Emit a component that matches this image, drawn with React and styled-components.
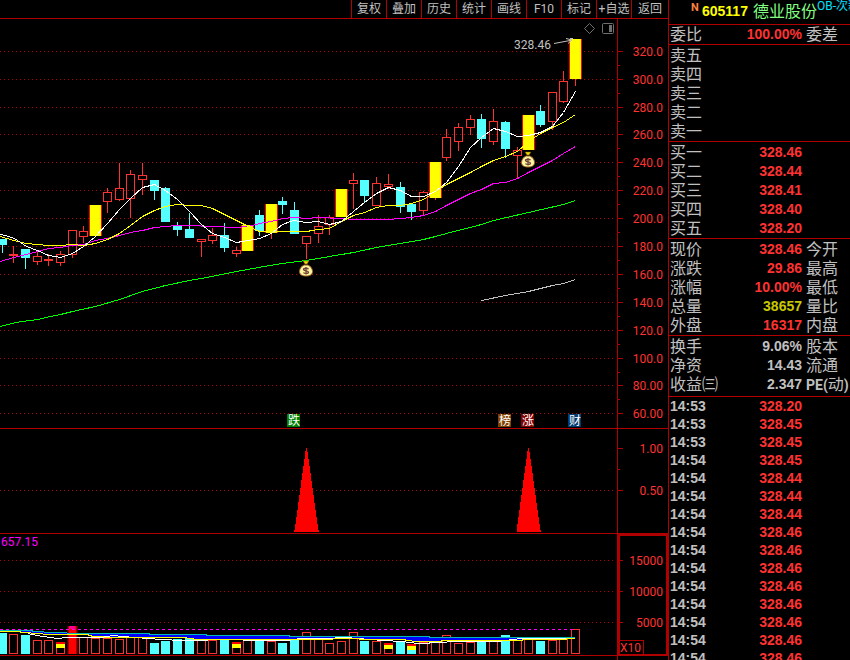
import React from 'react';
import styled, { createGlobalStyle } from 'styled-components';

const LINE = '#b00000';
const RED = '#ff3232';
const CYAN = '#54ffff';
const YELLOW = '#ffff00';
const GREY = '#c0c0c0';

const GlobalStyle = createGlobalStyle`
  * {
    box-sizing: border-box;
  }

  body {
    margin: 0;
    background: #000;
    color: ${GREY};
    font-family: Roboto, 'Noto Sans CJK SC', sans-serif;
    font-size: 12px;
  }
`;

const Page = styled.div`
  display: flex;
  height: 100vh;
  overflow: hidden;
`;

const ChartArea = styled.main`
  flex: 1;
  min-width: 0;
  display: flex;
  flex-direction: column;
`;

const Toolbar = styled.nav`
  display: flex;
  justify-content: flex-end;
  flex: 0 0 19px;
  border-bottom: 1px solid ${LINE};
`;

const ToolButton = styled.button`
  width: ${props => (props.$last ? 37 : 35)}px;
  padding: 0;
  border: none;
  border-left: 1px solid ${LINE};
  background: none;
  color: ${GREY};
  font-family: inherit;
  font-size: 12px;
  line-height: 16px;
  white-space: nowrap;
  cursor: pointer;

  &:hover {
    color: #fff;
  }
`;

const Panel = styled.section`
  display: grid;
  grid-template-columns: minmax(0, 1fr) 51px;
  flex: 0 0 auto;
  height: ${props => props.$height}px;
  border-bottom: 1px solid ${LINE};
`;

const Plot = styled.svg`
  display: block;
  width: 100%;
  height: 100%;
`;

const Axis = styled.div`
  min-height: 0;
  border-left: 1px solid ${LINE};
`;

const PanelEnd = styled.div`
  display: grid;
  grid-template-columns: minmax(0, 1fr) 51px;
  flex: 1;
`;

const AxisText = styled.text`
  fill: ${RED};
  font-family: Roboto, sans-serif;
  font-size: 12px;
  text-anchor: end;
`;

const ChartText = styled.text`
  fill: ${props => props.$color};
  font-family: Roboto, 'Noto Sans CJK SC', sans-serif;
  font-size: 12px;
`;

const Sidebar = styled.aside`
  flex: 0 0 182px;
  min-width: 0;
  overflow: hidden;
  border-left: 1px solid ${LINE};
`;

const StockHeader = styled.header`
  display: flex;
  height: 25px;
  padding-left: 22px;
  border-bottom: 1px solid ${LINE};
  white-space: nowrap;
`;

const Market = styled.span`
  flex: 0 0 11px;
  color: #ff8040;
  font-size: 11px;
  font-weight: bold;
  line-height: 15px;
`;

const Code = styled.span`
  flex: 0 0 51px;
  color: ${YELLOW};
  font-family: 'Liberation Sans', sans-serif;
  font-size: 14px;
  font-weight: bold;
  line-height: 23px;
`;

const StockName = styled.h1`
  flex: 0 0 63px;
  margin: 0;
  color: #80ff80;
  font-size: 16px;
  font-weight: normal;
  line-height: 23px;
`;

const Board = styled.span`
  flex: none;
  color: #00e0ff;
  font-size: 12px;
  line-height: 13px;
`;

const Block = styled.section`
  padding: ${props => props.$padding || '1px 0 0'};
  border-bottom: ${props => (props.$open ? 'none' : `1px solid ${LINE}`)};
`;

const QuoteTable = styled.table`
  width: 100%;
  table-layout: fixed;
  border-spacing: 0;
  line-height: ${props => props.$row || 19}px;
  white-space: nowrap;
`;

const NameCell = styled.th`
  width: 53px;
  height: 19px;
  padding: 0 0 0 1px;
  font-size: 16px;
  font-weight: normal;
  line-height: 19px;
  text-align: left;
`;

const ValueCell = styled.td`
  width: 80px;
  padding: 0;
  color: ${props => props.$color || RED};
  font-family: 'Liberation Sans', sans-serif;
  font-size: 14px;
  font-weight: bold;
  text-align: right;
`;

const SideCell = styled.td`
  padding: 0 0 0 4px;
  font-size: 16px;
  line-height: 19px;
`;

const Latin = styled.b`
  font-size: 14px;
  line-height: 1;
`;

const TimeCell = styled.td`
  width: 53px;
  height: 18px;
  padding: 0 0 0 1px;
  font-family: 'Liberation Sans', sans-serif;
  font-size: 14px;
  font-weight: bold;
`;

const tools = ['复权', '叠加', '历史', '统计', '画线', 'F10', '标记', '+自选', '返回'];

// type, x, high, top, bottom, low, volume top
const candles = [
  ['down', 2, 239, 239, 245, 253, 633],
  ['up', 13, 246, 254, 256, 263, 634],
  ['down', 25, 249, 249, 258, 269, 635],
  ['up', 37, 252, 256, 262, 265, 640],
  ['up', 48, 254, 259, 261, 266, 640],
  ['up', 60, 251, 254, 263, 266, 642, 'mark'],
  ['up', 72, 230, 230, 255, 258, 626, 'peak'],
  ['up', 83, 226, 231, 237, 243, 637],
  ['limit', 95, 205, 205, 236, 236, 638],
  ['up', 107, 188, 192, 202, 213, 638],
  ['up', 119, 163, 188, 200, 201, 639],
  ['up', 130, 170, 174, 199, 218, 634],
  ['up', 142, 163, 175, 180, 195, 637],
  ['down', 154, 180, 180, 191, 200, 643],
  ['down', 165, 187, 188, 222, 222, 641],
  ['down', 177, 222, 226, 230, 236, 639],
  ['down', 189, 213, 229, 238, 238, 638],
  ['up', 201, 239, 239, 242, 257, 640],
  ['up', 212, 228, 235, 241, 244, 640],
  ['down', 224, 223, 235, 248, 252, 637],
  ['up', 236, 247, 250, 254, 257, 642, 'mark'],
  ['limit', 247, 225, 225, 251, 251, 636],
  ['down', 259, 210, 215, 231, 236, 637],
  ['limit', 271, 204, 204, 233, 239, 641],
  ['down', 282, 197, 201, 205, 214, 643],
  ['down', 294, 202, 210, 234, 234, 640],
  ['up', 306, 236, 236, 244, 259, 632],
  ['up', 318, 215, 226, 234, 243, 639],
  ['up', 329, 215, 217, 225, 235, 643],
  ['limit', 341, 189, 189, 217, 217, 641],
  ['up', 353, 173, 180, 184, 209, 632],
  ['down', 364, 180, 180, 196, 202, 641],
  ['up', 376, 177, 183, 206, 206, 641],
  ['up', 388, 174, 184, 187, 189, 643, 'mark'],
  ['down', 400, 182, 187, 207, 213, 642],
  ['down', 411, 204, 204, 212, 220, 644, 'mark'],
  ['up', 423, 191, 192, 211, 215, 642],
  ['limit', 435, 162, 162, 198, 200, 640],
  ['up', 446, 129, 137, 158, 161, 635],
  ['up', 458, 123, 127, 142, 151, 643],
  ['up', 470, 115, 119, 128, 135, 642],
  ['down', 481, 114, 119, 139, 148, 639],
  ['up', 493, 109, 121, 142, 145, 639],
  ['down', 505, 121, 122, 149, 158, 635],
  ['up', 517, 147, 150, 156, 178, 640],
  ['limit', 528, 115, 115, 150, 150, 639],
  ['down', 540, 105, 111, 125, 127, 641],
  ['up', 552, 92, 92, 122, 130, 640],
  ['up', 563, 71, 81, 102, 103, 639],
  ['limit', 575, 39, 39, 79, 86, 629],
];

const averages = [
  {
    color: '#00ff00',
    points: '0,326 15,322 37,319 50,316 60,314 72,311 95,306 119,299 142,291 165,285 189,280 206,277 236,271 258,267 282,263 306,260 329,256 353,252 376,247 400,243 423,239 435,236 446,233 481,224 493,220 528,212 563,204 575,200',
  },
  { color: GREY, points: '481,300 505,295 528,291 552,285 563,283 575,279' },
  {
    color: '#ff00ff',
    points: '0,261 13,257 26,254 37,251 48,248 60,247 72,245 83,244 95,240 107,238 119,235 130,232 142,230 154,227 165,226 177,225 189,225 212,226 236,227 248,226 259,223 271,221 282,218 294,217 306,218 318,217 341,218 353,219 388,219 400,218 411,217 423,215 435,211 446,205 458,199 470,193 481,189 493,183 505,182 517,178 528,172 552,160 563,153 575,146',
  },
  {
    color: YELLOW,
    points: '0,236 13,240 26,243 37,244 48,245 60,245 72,244 83,245 95,243 107,239 119,233 130,225 142,216 154,210 165,206 177,204 189,205 201,205 212,208 224,214 236,220 248,226 259,231 271,231 306,231 318,229 329,228 341,221 353,215 364,212 376,207 388,205 400,205 411,203 423,199 435,191 446,184 458,178 470,172 481,166 493,160 505,156 517,151 528,141 540,133 552,127 563,122 575,114',
  },
  {
    color: '#ffffff',
    points: '0,234 5,235 14,238 26,246 37,250 48,255 60,257 72,253 83,246 95,236 107,223 119,209 130,198 142,187 154,184 165,190 177,199 189,211 201,224 212,233 224,237 236,242 248,240 259,238 271,233 282,224 293,220 306,222 318,221 329,224 341,221 353,211 364,202 376,193 388,187 400,190 411,196 423,196 435,191 446,182 458,166 470,147 481,137 493,128 505,131 517,136 528,135 540,132 552,126 563,112 575,91',
  },
];

const priceTicks = [
  [51, '320.0'], [79, '300.0'], [107, '280.0'], [134, '260.0'], [162, '240.0'],
  [190, '220.0'], [218, '200.0'], [246, '180.0'], [274, '160.0'], [302, '140.0'],
  [330, '120.0'], [358, '100.0'], [385, '80.00'], [413, '60.00'],
];
const signalTicks = [[448, '1.00'], [490, '0.50']];
const volumeTicks = [[560, '15000'], [591, '10000'], [622, '5000']];

const newsTags = [
  [287, '跌', '#008000'],
  [498, '榜', '#804000'],
  [521, '涨', '#800000'],
  [568, '财', '#003a70'],
];

const volumeTeal = '0,630 32,630 33,631 55,632 78,633 149,633 150,634 206,634 207,635 289,635 290,636 429,636 430,637 575,637';
const volumeYellow = '0,631 20,631 21,632 40,633 46,634 87,634 93,636 114,637 183,637 197,639 330,639 337,638 359,638 360,639 405,639 406,640 418,641 441,641 442,640 522,640 523,639 566,639 567,638 575,638';
const volumeWhite = '28,633 32,634 43,636 58,638 66,637 101,637 113,635 122,636 149,638 160,639 184,640 207,640 208,639 277,640 288,640 300,638 324,638 347,637 357,638 383,640 403,641 409,642 418,643 429,643 430,642 441,642 453,641 499,641 512,639 523,638 575,638';

const offers = ['卖五', '卖四', '卖三', '卖二', '卖一'];
const bids = [
  ['买一', '328.46'],
  ['买二', '328.44'],
  ['买三', '328.41'],
  ['买四', '328.40'],
  ['买五', '328.20'],
];
const quotes = [
  ['现价', '328.46', '今开'],
  ['涨跌', '29.86', '最高'],
  ['涨幅', '10.00%', '最低'],
  ['总量', '38657', '量比', '#c8c800'],
  ['外盘', '16317', '内盘'],
];
const fundamentals = [
  ['换手', '9.06%', '股本', GREY],
  ['净资', '14.43', '流通', GREY],
  ['收益㈢', '2.347', <><Latin>PE(</Latin>动<Latin>)</Latin></>, GREY],
];
const trades = [
  ['14:53', '328.20'], ['14:53', '328.45'], ['14:53', '328.45'], ['14:54', '328.45'],
  ['14:54', '328.44'], ['14:54', '328.44'], ['14:54', '328.44'], ['14:54', '328.46'],
  ['14:54', '328.46'], ['14:54', '328.46'], ['14:54', '328.46'], ['14:54', '328.46'],
  ['14:54', '328.46'], ['14:54', '328.46'], ['14:54', '328.46'],
];

function GridLine({ y }) {
  return <line x1="0" x2="614" y1={y + 0.5} y2={y + 0.5} stroke={LINE} strokeDasharray="1 3" />;
}

function Candle({ data }) {
  const [type, x, high, top, bottom, low] = data;
  const color = type === 'down' ? CYAN : RED;

  if (type === 'limit') {
    return (
      <g>
        {low > bottom && <rect x={x} y={bottom} width="1" height={low - bottom} fill={RED} />}
        <rect x={x - 6} y={top} width="13" height={bottom - top} fill="#ff0000" />
        <rect x={x - 5} y={top} width="11" height={bottom - top} fill={YELLOW} />
      </g>
    );
  }

  return (
    <g>
      <rect x={x} y={high} width="1" height={top - high} fill={color} />
      <rect x={x} y={bottom} width="1" height={low - bottom} fill={color} />
      {type === 'down' ? (
        <rect x={x - 4} y={top} width="9" height={bottom - top} fill={CYAN} />
      ) : (
        <rect x={x - 3.5} y={top + 0.5} width="8" height={Math.max(bottom - top - 1, 1)} fill="none" stroke={RED} />
      )}
    </g>
  );
}

function VolumeBar({ data }) {
  const [type, x, , , , , top, extra] = data;

  if (extra === 'peak') {
    return (
      <g>
        <rect x={x - 5} y={top} width="11" height={654 - top} fill="#500000" />
        <rect x={x - 4} y={top} width="9" height={654 - top} fill="#a00000" />
        <rect x={x - 3} y={top} width="7" height={654 - top} fill="#ff0000" />
        <rect x={x - 3} y={top} width="6" height="3" fill="#ff0090" />
      </g>
    );
  }

  return (
    <g>
      {type === 'down' ? (
        <rect x={x - 4} y={top} width="9" height={654 - top} fill={CYAN} />
      ) : (
        <rect x={x - 3.5} y={top + 0.5} width="8" height={653 - top} fill="none" stroke={RED} />
      )}
      {extra === 'mark' && (
        <>
          <rect x={x - 4} y={top} width="9" height="2" fill="#ff0000" />
          <rect x={x - 4} y={top + 2} width="9" height="4" fill={YELLOW} />
        </>
      )}
    </g>
  );
}

function MoneyBag({ x, y }) {
  return (
    <g transform={`translate(${x} ${y})`}>
      <path d="M-3 -8h6l-2 3h-2z" fill="#f0e000" stroke="#704000" strokeWidth="0.5" />
      <path d="M-2 -4h4c3 1.500 4.500 4 4.500 6.500c0 3 -2.500 4.500 -6.500 4.500s-6.500 -1.500 -6.500 -4.500c0 -2.500 1.500 -5 4.500 -6.500z" fill="#fff6a0" stroke="#a06020" />
      <path d="M2.500 0.200c-0.500 -1.200 -5 -1.500 -5 0.300c0 1.800 5 0.800 5 2.700c0 1.800 -4.500 1.500 -5 0.200M0 -2v7.500" fill="none" stroke="#704038" strokeWidth="1.300" />
    </g>
  );
}

function PricePlot() {
  return (
    <Plot viewBox="0 19 617 409" preserveAspectRatio="xMaxYMid meet" role="img">
      <g shapeRendering="crispEdges">
        {priceTicks.map(([y]) => <GridLine key={y} y={y} />)}
        {candles.map(candle => <Candle key={candle[1]} data={candle} />)}
        <g transform="translate(0.5 0.5)">
          {averages.map(line => (
            <polyline key={line.color} points={line.points} fill="none" stroke={line.color} />
          ))}
        </g>
        {newsTags.map(([x, , color]) => (
          <rect key={x} x={x} y="414" width="13" height="13" fill={color} />
        ))}
      </g>
      {newsTags.map(([x, label]) => (
        <ChartText key={x} x={x + 1} y="425" $color="#fff">{label}</ChartText>
      ))}
      <MoneyBag x={306} y={269} />
      <MoneyBag x={528} y={160} />
      <ChartText x="514" y="49" $color={GREY}>328.46</ChartText>
      <path d="M554 43.500L570 40.500M566 38.500l6 1.500l-4 3.500M570 38.500h3" fill="none" stroke={GREY} />
      <path d="M589.500 23.500l5 5l-5 5l-5 -5z" fill="none" stroke="#707070" />
      <rect x="602.500" y="23.500" width="11" height="10" rx="1" fill="none" stroke="#707070" />
      <rect x="609" y="25" width="3" height="7" fill="#707070" />
    </Plot>
  );
}

function SignalPlot() {
  return (
    <Plot viewBox="0 429 617 104" preserveAspectRatio="xMaxYMid meet" role="img">
      <g shapeRendering="crispEdges">
        <GridLine y={490} />
        <polygon points="306,448 307,448 308,455 318,528 319,532 294,532 295,528 305,455" fill="#ff0000" />
        <polygon points="528,448 529,448 530,455 540,528 541,532 517,532 517,528 527,455" fill="#ff0000" />
      </g>
    </Plot>
  );
}

function VolumePlot() {
  const lowerEdge = volumeYellow.split(' ').reverse().join(' ');
  return (
    <Plot viewBox="0 534 617 121" preserveAspectRatio="xMaxYMid meet" role="img">
      <g shapeRendering="crispEdges">
        {volumeTicks.map(([y]) => <GridLine key={y} y={y} />)}
        {candles.map(candle => (
          <VolumeBar key={candle[1]} data={candle} />
        ))}
        <g transform="translate(0 0.5)">
          <polygon points={`${volumeTeal} ${lowerEdge}`} fill="#0000ff" />
          <polyline points={volumeTeal} fill="none" stroke="#00b8b8" />
          <polyline points={volumeWhite} fill="none" stroke="#fff" />
          <polyline points={volumeYellow} fill="none" stroke={YELLOW} />
          <line x1="0" x2="575" y1="629" y2="629" stroke="#ff00ff" strokeDasharray="3 3" />
        </g>
      </g>
      <ChartText x="1" y="546" $color="#ff00ff">657.15</ChartText>
    </Plot>
  );
}

function Scale({ top, height, ticks, minor = [], children }) {
  return (
    <Axis>
      <Plot viewBox={`618 ${top} 50 ${height}`} preserveAspectRatio="xMaxYMid meet">
        <g shapeRendering="crispEdges">
          {ticks.map(([y]) => <rect key={y} x="618" y={y} width="5" height="1" fill={LINE} />)}
          {minor.map(y => <rect key={y} x="618" y={y} width="2" height="1" fill={LINE} />)}
          {children}
        </g>
        {ticks.map(([y, label]) => (
          <AxisText key={y} x="663" y={y + 5}>{label}</AxisText>
        ))}
      </Plot>
    </Axis>
  );
}

function QuoteRows({ rows }) {
  return (
    <QuoteTable>
      <tbody>
        {rows.map(([name, value, side, color]) => (
          <tr key={name}>
            <NameCell scope="row">{name}</NameCell>
            <ValueCell $color={color}>{value}</ValueCell>
            <SideCell>{side}</SideCell>
          </tr>
        ))}
      </tbody>
    </QuoteTable>
  );
}

export default function App() {
  return (
    <>
      <GlobalStyle />
      <Page>
        <ChartArea>
          <Toolbar>
            {tools.map((tool, index) => (
              <ToolButton key={tool} type="button" $last={index === tools.length - 1}>{tool}</ToolButton>
            ))}
          </Toolbar>
          <Panel $height={410}>
            <PricePlot />
            <Scale
              top={19}
              height={409}
              ticks={priceTicks}
              minor={priceTicks.slice(0, -1).map(([y]) => y + 14)}
            />
          </Panel>
          <Panel $height={105}>
            <SignalPlot />
            <Scale top={429} height={104} ticks={signalTicks} minor={[469]} />
          </Panel>
          <Panel $height={122}>
            <VolumePlot />
            <Scale top={534} height={121} ticks={volumeTicks} minor={[576, 607]}>
              <rect x="619" y="535" width="48" height="120" fill="none" stroke={LINE} strokeWidth="2" />
              <rect x="618.500" y="640.500" width="25" height="14" fill="none" stroke={LINE} />
              <ChartText x="620" y="652" $color={RED}>X10</ChartText>
            </Scale>
          </Panel>
          <PanelEnd>
            <div />
            <Axis />
          </PanelEnd>
        </ChartArea>

        <Sidebar>
          <StockHeader>
            <Market>N</Market>
            <Code>605117</Code>
            <StockName>德业股份</StockName>
            <Board>OB-次新股</Board>
          </StockHeader>
          <Block $padding="0">
            <QuoteRows rows={[['委比', '100.00%', '委差']]} />
          </Block>
          <Block>
            <QuoteRows rows={offers.map(name => [name])} />
          </Block>
          <Block>
            <QuoteRows rows={bids} />
          </Block>
          <Block>
            <QuoteRows rows={quotes} />
          </Block>
          <Block $padding="1px 0 2px">
            <QuoteRows rows={fundamentals} />
          </Block>
          <Block $padding="0" $open>
            <QuoteTable $row={18}>
              <tbody>
                {trades.map(([time, price], index) => (
                  <tr key={index}>
                    <TimeCell>{time}</TimeCell>
                    <ValueCell>{price}</ValueCell>
                    <td />
                  </tr>
                ))}
              </tbody>
            </QuoteTable>
          </Block>
        </Sidebar>
      </Page>
    </>
  );
}
